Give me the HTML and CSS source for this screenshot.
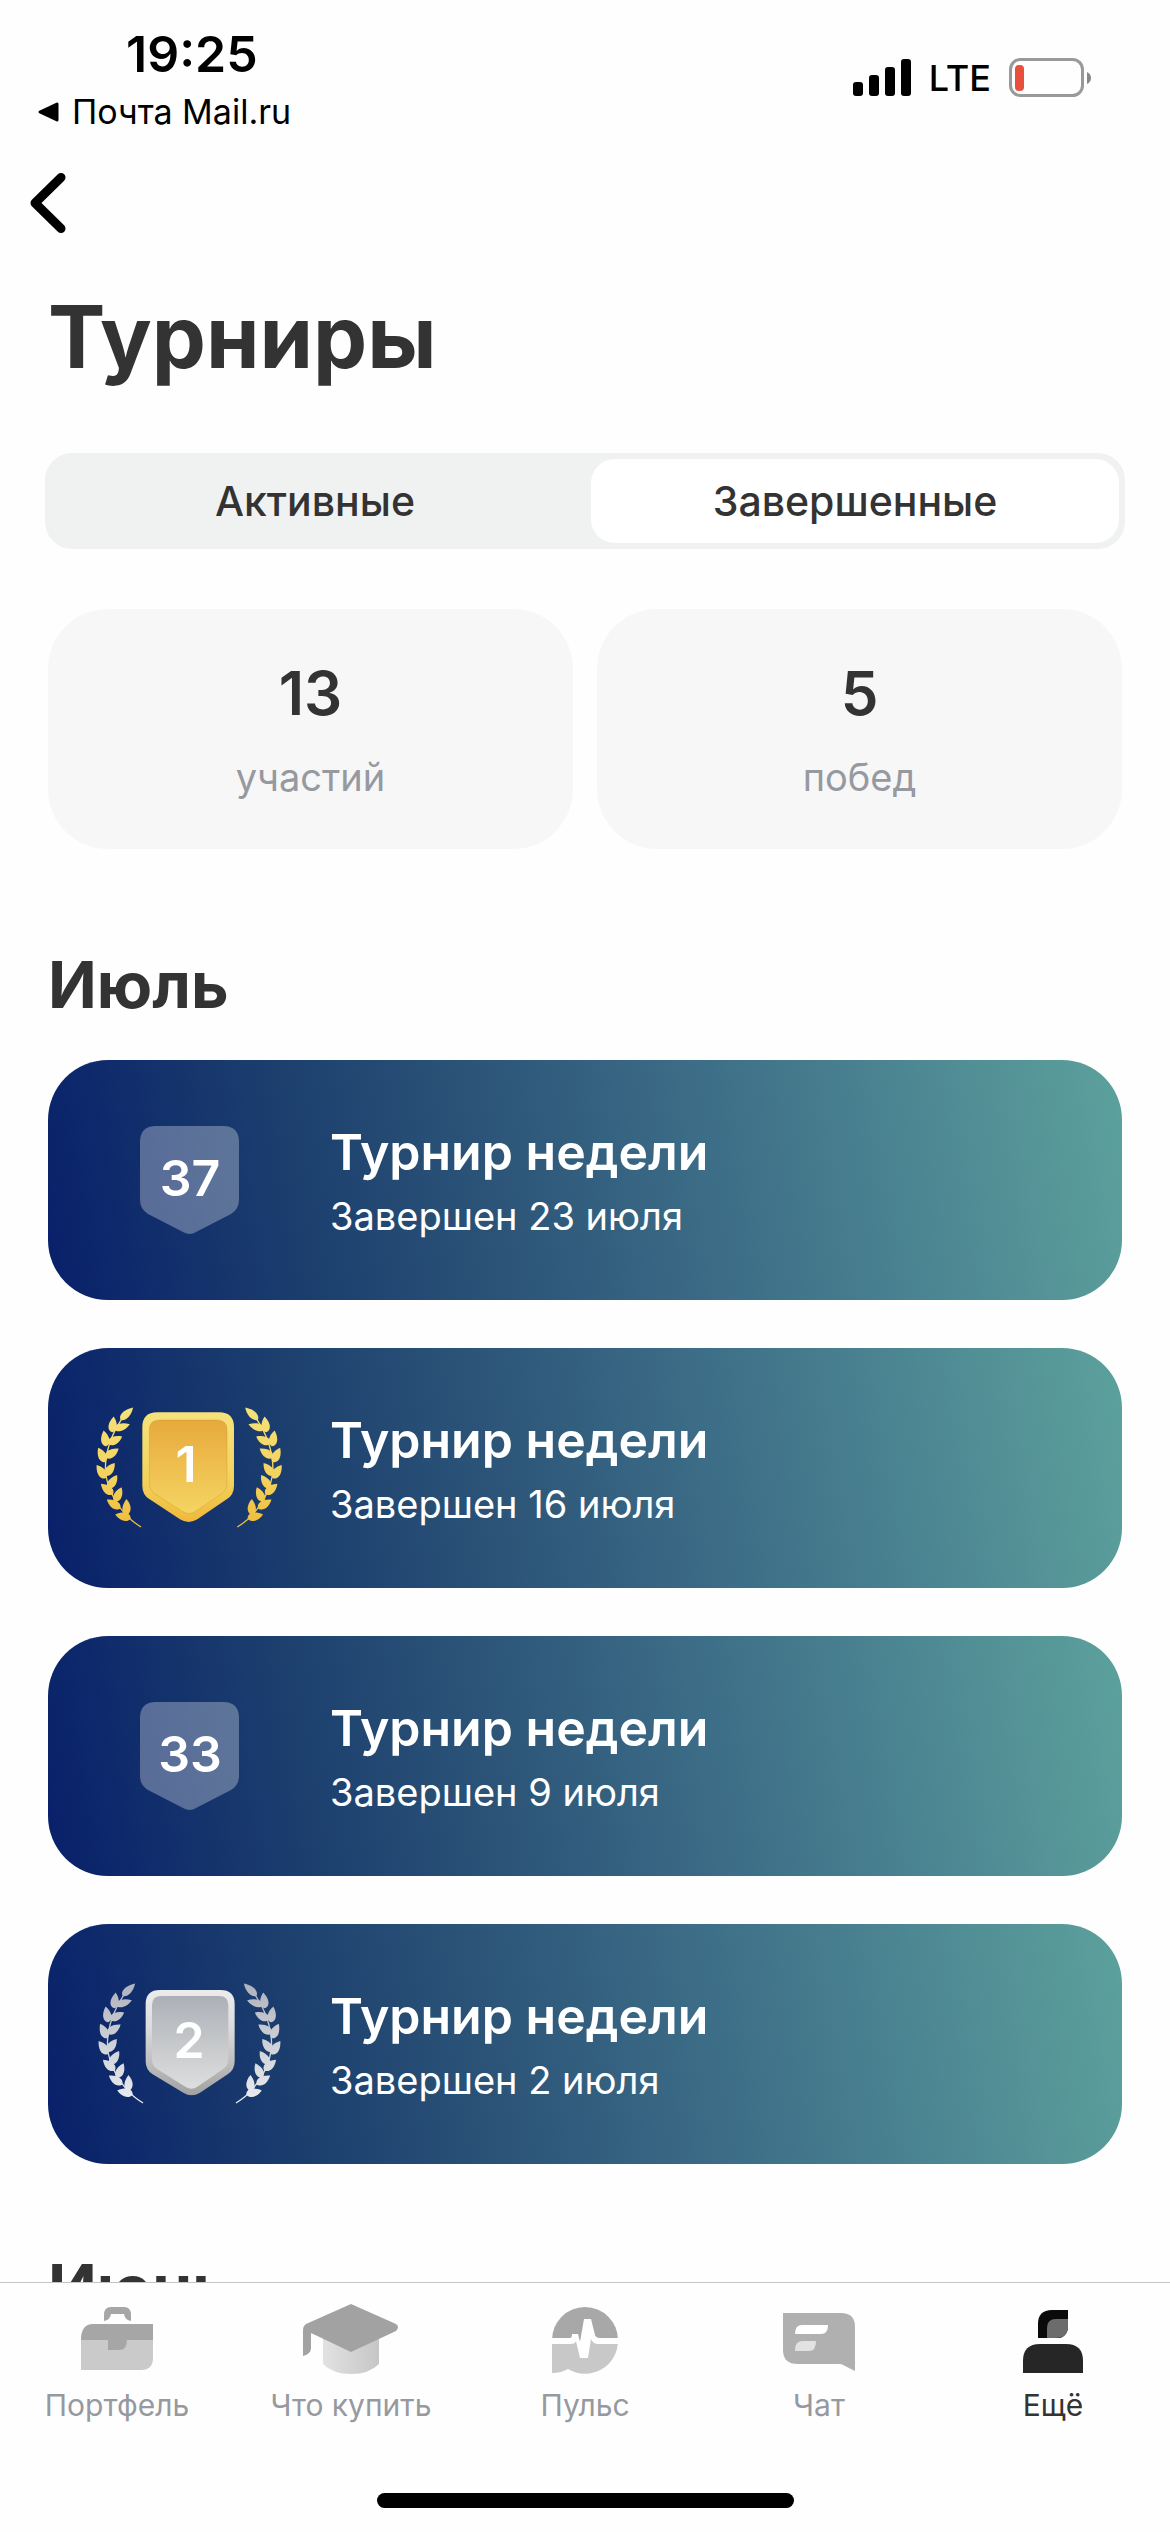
FILE: index.html
```html
<!DOCTYPE html>
<html lang="ru">
<head>
    <meta charset="UTF-8">
    <meta name="viewport" content="width=device-width, initial-scale=1.0">
    <title>Турниры</title>
    <link rel="stylesheet" href="styles.css">
</head>
<body>
    <!-- Shared shapes for the badges -->
    <svg class="defs" width="0" height="0" aria-hidden="true">
        <defs>
            <path id="leaf" d="M0 0C3-16 25-19 48 0C30 15 8 16 0 0Z"/>
            <mask id="laurel" maskUnits="userSpaceOnUse" x="40" y="70" width="160" height="380">
                <g fill="#fff">
                    <path d="M183 441Q150 420 134 400Q82 340 76 270Q76 190 126 116" fill="none" stroke="#fff" stroke-width="4"/>
                    <use href="#leaf" transform="translate(122 120) rotate(-45) scale(1.1 .9)"/>
                    <use href="#leaf" transform="translate(102 149) rotate(-19) scale(1.05 .9)"/>
                    <use href="#leaf" transform="translate(97 157) rotate(-85)"/>
                    <use href="#leaf" transform="translate(84 192) rotate(-28)"/>
                    <use href="#leaf" transform="translate(80 199) rotate(-101)"/>
                    <use href="#leaf" transform="translate(77 234) rotate(-36)"/>
                    <use href="#leaf" transform="translate(77 246) rotate(-118)"/>
                    <use href="#leaf" transform="translate(76 288) rotate(-54)"/>
                    <use href="#leaf" transform="translate(78 294) rotate(-126)"/>
                    <use href="#leaf" transform="translate(86 326) rotate(-58)"/>
                    <use href="#leaf" transform="translate(98 344) rotate(-137) scale(1 -1)"/>
                    <use href="#leaf" transform="translate(106 366) rotate(-67)"/>
                    <use href="#leaf" transform="translate(120 386) rotate(-145) scale(1 -1)"/>
                    <use href="#leaf" transform="translate(141 405) rotate(-92)"/>
                    <use href="#leaf" transform="translate(152 416) rotate(-165) scale(1 -1)"/>
                </g>
            </mask>
            <linearGradient id="gold-rim" x1="0" y1="0" x2="0" y2="1">
                <stop offset="0" stop-color="#f6e27c"/>
                <stop offset=".6" stop-color="#f3d25c"/>
                <stop offset="1" stop-color="#efb93a"/>
            </linearGradient>
            <linearGradient id="gold-face" x1="0" y1="0" x2="0" y2="1">
                <stop offset="0" stop-color="#e7a93c"/>
                <stop offset="1" stop-color="#f5d562"/>
            </linearGradient>
            <linearGradient id="silver-rim" x1="0" y1="0" x2="0" y2="1">
                <stop offset="0" stop-color="#ececec"/>
                <stop offset=".35" stop-color="#dcdcdc"/>
                <stop offset="1" stop-color="#a2a2a2"/>
            </linearGradient>
            <linearGradient id="silver-face" x1="0" y1="0" x2="0" y2="1">
                <stop offset="0" stop-color="#acb0b6"/>
                <stop offset="1" stop-color="#dedede"/>
            </linearGradient>
            <linearGradient id="silver-leaf" x1="0" y1="0" x2="0" y2="1">
                <stop offset="0" stop-color="#adb1bb"/>
                <stop offset="1" stop-color="#eceef2"/>
            </linearGradient>
            <linearGradient id="hat" x1="0" y1="0" x2="1" y2="0">
                <stop offset="0" stop-color="#e2e2e2"/>
                <stop offset="1" stop-color="#c6c6c6"/>
            </linearGradient>
        </defs>
    </svg>

    <div class="status-bar">
        <div class="status-left">
            <div class="time">19:25</div>
            <a class="return-link" href="#">
                <svg width="22" height="20" viewBox="0 0 22 20"><path d="M2 10L19 2V18Z" stroke="#000" stroke-width="3" stroke-linejoin="round"/></svg>
                Почта Mail.ru
            </a>
        </div>
        <div class="status-right">
            <svg width="58" height="38" viewBox="0 0 58 38">
                <rect x="0" y="23" width="10" height="14" rx="3"/>
                <rect x="16" y="16" width="10" height="21" rx="3"/>
                <rect x="32" y="8" width="10" height="29" rx="3"/>
                <rect x="48" y="0" width="10" height="37" rx="3"/>
            </svg>
            <span class="network">LTE</span>
            <svg width="82" height="40" viewBox="0 0 82 40">
                <rect x="1.5" y="1.5" width="72" height="36" rx="10" fill="none" stroke="#999" stroke-width="3"/>
                <rect x="6" y="7" width="9" height="26" rx="4" fill="#e94f3d"/>
                <path d="M78 14Q82 16 82 20Q82 24 78 26Z" fill="#888"/>
            </svg>
        </div>
    </div>

    <header class="header">
        <button class="back" type="button" aria-label="Назад">
            <svg width="36" height="60" viewBox="0 0 36 60"><path d="M31 4.500L5 30L31 55.500" fill="none" stroke="#000" stroke-width="9" stroke-linecap="round" stroke-linejoin="round"/></svg>
        </button>
    </header>

    <main class="content">
        <h1>Турниры</h1>

        <div class="tabs">
            <button class="tab" type="button">Активные</button>
            <button class="tab tab-active" type="button">Завершенные</button>
        </div>

        <div class="stats">
            <div class="stat">
                <div class="stat-value">13</div>
                <div class="stat-label">участий</div>
            </div>
            <div class="stat">
                <div class="stat-value">5</div>
                <div class="stat-label">побед</div>
            </div>
        </div>

        <section class="month">
            <h2>Июль</h2>
            <div class="list">
                <a class="card" href="#">
                    <svg class="badge" width="186" height="122" viewBox="0 0 186 122">
                        <path d="M44 23Q44 7 60 7H127Q143 7 143 23V81Q143 90 135 95L100 113Q94 117 87 113L52 95Q44 90 44 81Z" fill="#fff" fill-opacity=".3"/>
                        <text class="place" x="94" y="77">37</text>
                    </svg>
                    <div class="card-text">
                        <div class="card-title">Турнир недели</div>
                        <div class="card-date">Завершен 23 июля</div>
                    </div>
                </a>
                <a class="card" href="#">
                    <svg class="badge" width="186" height="122" viewBox="0 0 186 122">
                        <g transform="translate(-16 -27) scale(.3333)">
                            <rect x="40" y="70" width="160" height="380" fill="url(#gold-rim)" mask="url(#laurel)"/>
                            <g transform="translate(655 0) scale(-1 1)">
                                <rect x="40" y="70" width="160" height="380" fill="url(#gold-rim)" mask="url(#laurel)"/>
                            </g>
                            <path d="M187 142Q187 97 232 97H417Q462 97 462 142V318Q462 345 440 358L352 418Q326 434 300 418L209 358Q187 345 187 318Z" fill="url(#gold-rim)"/>
                            <path d="M208 150Q208 120 238 120H411Q441 120 441 150V310Q441 330 425 341L345 395Q327 406 309 395L224 341Q208 330 208 310Z" fill="url(#gold-face)" stroke="#b99432" stroke-width="1"/>
                        </g>
                        <text class="place" x="90" y="75">1</text>
                    </svg>
                    <div class="card-text">
                        <div class="card-title">Турнир недели</div>
                        <div class="card-date">Завершен 16 июля</div>
                    </div>
                </a>
                <a class="card" href="#">
                    <svg class="badge" width="186" height="122" viewBox="0 0 186 122">
                        <path d="M44 23Q44 7 60 7H127Q143 7 143 23V81Q143 90 135 95L100 113Q94 117 87 113L52 95Q44 90 44 81Z" fill="#fff" fill-opacity=".3"/>
                        <text class="place" x="94" y="77">33</text>
                    </svg>
                    <div class="card-text">
                        <div class="card-title">Турнир недели</div>
                        <div class="card-date">Завершен 9 июля</div>
                    </div>
                </a>
                <a class="card" href="#">
                    <svg class="badge" width="186" height="122" viewBox="0 0 186 122">
                        <g transform="translate(-16 -23) scale(.3333)">
                            <g transform="translate(6 -12)">
                                <rect x="40" y="70" width="160" height="380" fill="url(#silver-leaf)" mask="url(#laurel)"/>
                            </g>
                            <g transform="translate(651 -12) scale(-1 1)">
                                <rect x="40" y="70" width="160" height="380" fill="url(#silver-leaf)" mask="url(#laurel)"/>
                            </g>
                            <path d="M197 132Q197 90 240 90H421Q464 90 464 132V304Q464 330 443 343L360 398Q335 414 310 398L218 343Q197 330 197 304Z" fill="url(#silver-rim)"/>
                            <path d="M216 136Q216 108 244 108H417Q445 108 445 136V298Q445 317 430 327L352 380Q335 392 316 380L231 327Q216 317 216 298Z" fill="url(#silver-face)"/>
                        </g>
                        <text class="place" x="93" y="75">2</text>
                    </svg>
                    <div class="card-text">
                        <div class="card-title">Турнир недели</div>
                        <div class="card-date">Завершен 2 июля</div>
                    </div>
                </a>
            </div>
        </section>

        <section class="month">
            <h2>Июнь</h2>
        </section>
    </main>

    <nav class="nav">
        <div class="nav-items">
            <a class="nav-item" href="#">
                <svg width="96" height="72" viewBox="0 0 96 72">
                    <path d="M35 17V11Q35 3 42 3H55Q62 3 62 11V17Q56 16 55 10H42Q41 16 35 17Z" fill="#a6a6a6"/>
                    <path d="M12 32H84V54Q84 66 72 66H12Z" fill="#cacaca"/>
                    <path d="M12 36Q12 20 24 20H84V36Z" fill="#a6a6a6"/>
                    <path d="M39 36H58Q58 46 50 46H39Z" fill="#a6a6a6"/>
                </svg>
                Портфель
            </a>
            <a class="nav-item" href="#">
                <svg width="96" height="72" viewBox="0 0 96 72">
                    <path d="M20 32H76V60Q66 70 48 70Q30 70 20 60Z" fill="url(#hat)"/>
                    <path d="M48 0L93 20Q97 23 93 27L48 48L8 29V44Q8 50 0 52V26Q0 22 3 20Z" fill="#a2a2a2"/>
                </svg>
                Что купить
            </a>
            <a class="nav-item" href="#">
                <svg width="96" height="72" viewBox="0 0 96 72">
                    <path d="M15 36A33 33 0 0 1 81 36Z" fill="#a8a8a8"/>
                    <path d="M15 36H81A33 33 0 0 1 31 65Q24 69 15 69Z" fill="#c8c8c8"/>
                    <path d="M14 34H33Q35 34 35 30H41L43 38L47 15H54L58 31Q59 34 63 34H82V40H61Q56 40 54 35L51 54H43L39 37Q38 40 34 40H14Z" fill="#fff"/>
                </svg>
                Пульс
            </a>
            <a class="nav-item" href="#">
                <svg width="96" height="72" viewBox="0 0 96 72">
                    <path d="M12 9H70Q84 9 84 23V67L72 61Q71 60 68 60H27Q12 60 12 46Z" fill="#b0b0b0"/>
                    <path d="M24 30Q24 21 31 21H57Q57 30 50 30Z" fill="#fff"/>
                    <path d="M24 47Q24 37 31 37H45Q45 47 38 47Z" fill="#e2e2e2"/>
                </svg>
                Чат
            </a>
            <a class="nav-item nav-active" href="#">
                <svg width="96" height="72" viewBox="0 0 96 72">
                    <path d="M33 34V20Q33 6 47 6H63V34Z" fill="#0a0a0a"/>
                    <path d="M63 15V35H50Q63 34 63 22Z" fill="#fefefe"/>
                    <path d="M42 34V24Q42 15 51 15H63V22Q63 34 51 34Z" fill="#6c6c6c"/>
                    <path d="M18 69V57Q18 40 35 40H61Q78 40 78 57V69Z" fill="#262626"/>
                </svg>
                Ещё
            </a>
        </div>
        <div class="home-indicator"></div>
    </nav>
</body>
</html>
```
FILE: styles.css
```css
* {
    box-sizing: border-box;
}

body {
    margin: 0;
    height: 100vh;
    display: flex;
    flex-direction: column;
    background-color: #fefefe;
    color: #333333;
    font-family: Inter, "Liberation Sans", sans-serif;
}

a {
    color: inherit;
    text-decoration: none;
}

button {
    border: none;
    padding: 0;
    background: none;
    color: inherit;
    font-family: inherit;
    cursor: pointer;
}

svg {
    display: block;
    flex-shrink: 0;
}

.defs {
    position: absolute;
}

/* Status bar */
.status-bar {
    display: flex;
    justify-content: space-between;
    padding: 24px 79px 0 38px;
    color: #000000;
}

.time {
    padding-left: 88px;
    font-size: 50px;
    font-weight: 600;
    line-height: 60px;
}

.return-link {
    display: flex;
    align-items: center;
    gap: 12px;
    margin-top: 8px;
    font-size: 34px;
    line-height: 40px;
}

.status-right {
    display: flex;
    align-items: center;
    gap: 18px;
    height: 108px;
}

.network {
    font-size: 36px;
    font-weight: 500;
    line-height: 40px;
}

/* Header */
.header {
    padding: 41px 30px 52px;
}

.back {
    display: block;
}

/* Content */
.content {
    flex: 1;
    min-height: 0;
    overflow: hidden;
    padding: 0 48px;
}

h1 {
    margin: 0 0 64px;
    font-size: 86px;
    line-height: 104px;
}

.tabs {
    display: grid;
    grid-template-columns: 1fr 1fr;
    gap: 12px;
    margin: 0 -3px;
    padding: 6px;
    border-radius: 27px;
    background-color: #f0f2f1;
}

.tab {
    height: 84px;
    border-radius: 24px;
    font-size: 41px;
    font-weight: 500;
}

.tab-active {
    background-color: #ffffff;
}

.stats {
    display: grid;
    grid-template-columns: 1fr 1fr;
    gap: 24px;
    margin: 60px 0 12px;
}

.stat {
    padding: 48px;
    border-radius: 60px;
    background-color: #f7f7f7;
    text-align: center;
}

.stat-value {
    font-size: 60px;
    font-weight: 600;
    line-height: 72px;
}

.stat-label {
    margin-top: 24px;
    color: #9699a0;
    font-size: 38px;
    line-height: 48px;
}

.month {
    padding-top: 84px;
}

h2 {
    margin: 0 0 35px;
    font-size: 64px;
    line-height: 80px;
}

.list {
    display: flex;
    flex-direction: column;
    gap: 48px;
}

.card {
    display: flex;
    align-items: center;
    gap: 48px;
    height: 240px;
    padding: 0 48px;
    border-radius: 60px;
    background: linear-gradient(80deg, #08206a 0%, #1c3f6e 24%, #2d5679 43%, #3e6f88 63%, #4f8a94 83%, #5ca19c 100%);
    color: #ffffff;
}

.place {
    fill: #ffffff;
    font-size: 50px;
    font-weight: 600;
    text-anchor: middle;
}

.card-title {
    font-size: 50px;
    font-weight: 600;
    line-height: 60px;
}

.card-date {
    margin-top: 12px;
    font-size: 38px;
    line-height: 44px;
}

/* Bottom navigation */
.nav {
    padding: 21px 0 24px;
    border-top: 1px solid #c4c4c4;
    background-color: #fefefe;
}

.nav-items {
    display: grid;
    grid-template-columns: repeat(5, 1fr);
}

.nav-item {
    display: flex;
    flex-direction: column;
    align-items: center;
    gap: 9px;
    color: #9699a0;
    font-size: 30px;
    line-height: 40px;
}

.nav-active {
    color: #333333;
}

.home-indicator {
    width: 417px;
    height: 15px;
    margin: 68px auto 0;
    border-radius: 8px;
    background-color: #000000;
}
```
